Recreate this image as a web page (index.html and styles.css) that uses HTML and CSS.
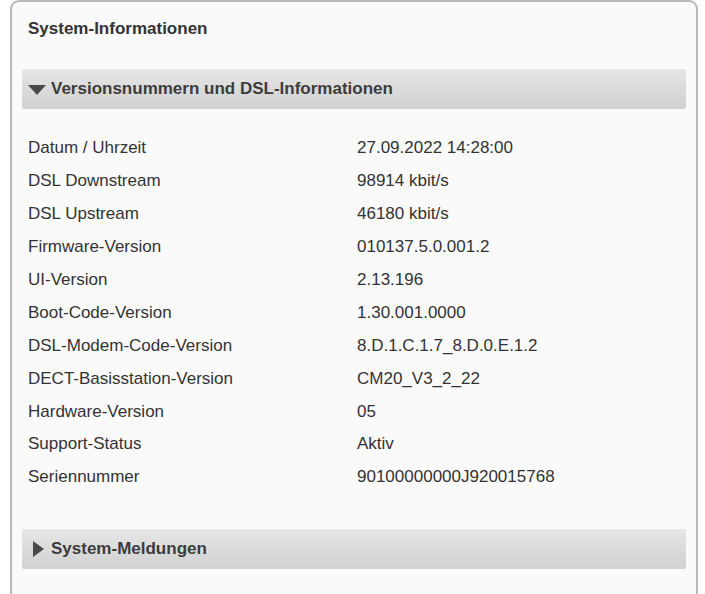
FILE: index.html
```html
<!DOCTYPE html>
<html lang="de">
<head>
<meta charset="utf-8">
<title>System-Informationen</title>
<link rel="stylesheet" href="styles.css">
</head>
<body>
<div class="panel">
  <h1 class="title">System-Informationen</h1>
  <section class="section">
    <div class="bar">
      <span class="tri tri-down"></span>
      <span class="bar-text">Versionsnummern und DSL-Informationen</span>
    </div>
    <dl class="info">
      <dt>Datum / Uhrzeit</dt><dd>27.09.2022 14:28:00</dd>
      <dt>DSL Downstream</dt><dd>98914 kbit/s</dd>
      <dt>DSL Upstream</dt><dd>46180 kbit/s</dd>
      <dt>Firmware-Version</dt><dd>010137.5.0.001.2</dd>
      <dt>UI-Version</dt><dd>2.13.196</dd>
      <dt>Boot-Code-Version</dt><dd>1.30.001.0000</dd>
      <dt>DSL-Modem-Code-Version</dt><dd>8.D.1.C.1.7_8.D.0.E.1.2</dd>
      <dt>DECT-Basisstation-Version</dt><dd>CM20_V3_2_22</dd>
      <dt>Hardware-Version</dt><dd>05</dd>
      <dt>Support-Status</dt><dd>Aktiv</dd>
      <dt>Seriennummer</dt><dd>90100000000J920015768</dd>
    </dl>
  </section>
  <section class="section">
    <div class="bar">
      <span class="tri tri-right"></span>
      <span class="bar-text">System-Meldungen</span>
    </div>
  </section>
</div>
</body>
</html>
```
FILE: styles.css
```css
html, body {
  margin: 0;
  padding: 0;
  background: #ffffff;
  font-family: "Liberation Sans", Arial, sans-serif;
  color: #333333;
}
.panel {
  margin: 0 7px 0 10px;
  height: 620px;
  box-sizing: border-box;
  border: 2px solid #b9b9b9;
  border-bottom: none;
  border-radius: 9px 9px 0 0;
  background: #fafafa;
  padding: 0 10px;
}
.title {
  margin: 17px 0 0 0;
  padding-left: 6px;
  font-size: 17px;
  line-height: 20px;
  font-weight: bold;
  color: #333333;
}
.section {
  display: flex;
  flex-direction: column;
}
.section + .section {
  margin-top: 35px;
}
.title + .section {
  margin-top: 30px;
}
.bar {
  height: 40px;
  display: flex;
  align-items: center;
  padding-left: 6px;
  background: linear-gradient(#e6e6e6, #d1d1d1);
  border-radius: 2px;
}
.bar-text {
  font-size: 17px;
  font-weight: bold;
  color: #3c3c3c;
}
.tri {
  display: block;
  flex: none;
}
.tri-down {
  width: 0;
  height: 0;
  border-left: 9px solid transparent;
  border-right: 9px solid transparent;
  border-top: 10px solid #4a4a4a;
  margin-right: 5px;
  margin-top: 1px;
}
.tri-right {
  width: 0;
  height: 0;
  border-top: 8px solid transparent;
  border-bottom: 8px solid transparent;
  border-left: 11px solid #4a4a4a;
  margin-left: 5px;
  margin-right: 7px;
}
.info {
  margin: 23px 0 0 0;
  padding-left: 6px;
  display: grid;
  grid-template-columns: 329px 1fr;
  grid-auto-rows: 32.9px;
  align-items: center;
  font-size: 17px;
  color: #333333;
}
.info dt, .info dd {
  margin: 0;
  line-height: 20px;
}
```
